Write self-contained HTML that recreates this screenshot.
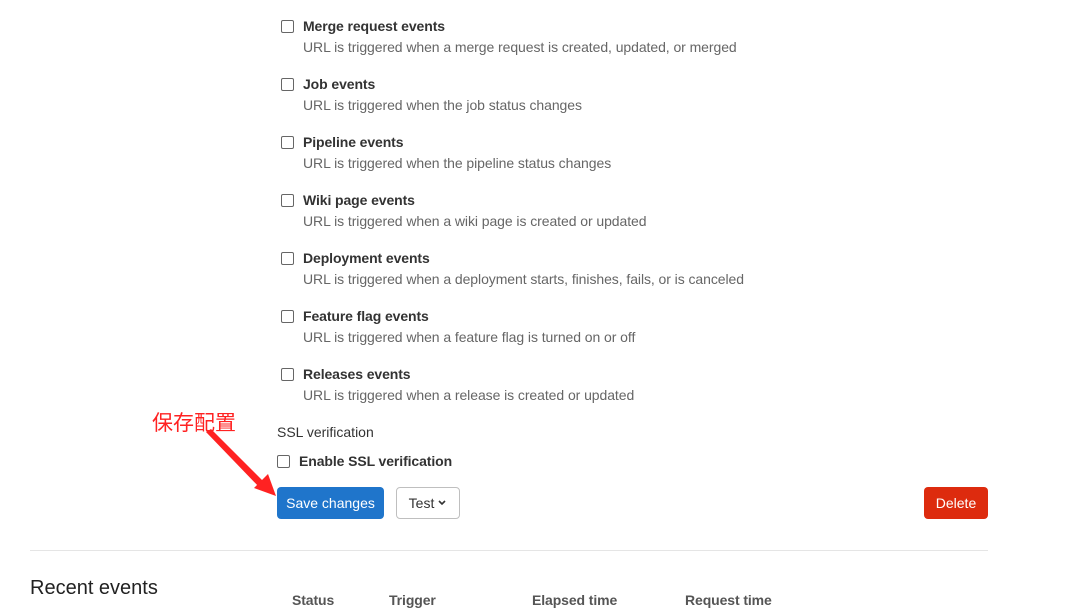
<!DOCTYPE html>
<html><head><meta charset="utf-8"><style>
body{margin:0;width:1080px;height:607px;overflow:hidden;background:#fff;font-family:"Liberation Sans",sans-serif;color:#333;position:relative}
.a{position:absolute;white-space:nowrap}
.cb{position:absolute;width:11px;height:11px;border:1px solid #666;border-radius:2px;background:#fff}
.t{font-size:14px;font-weight:bold;color:#333;letter-spacing:-0.1px}
.d{font-size:14px;color:#666;letter-spacing:-0.07px}
.btn{position:absolute;border-radius:4px;font-size:14px;box-sizing:border-box;display:flex;align-items:center;justify-content:center}
</style></head><body>
<div class="cb" style="left:281px;top:20px"></div><div class="a t" style="left:303px;top:18px">Merge request events</div><div class="a d" style="left:303px;top:39px">URL is triggered when a merge request is created, updated, or merged</div>
<div class="cb" style="left:281px;top:78px"></div><div class="a t" style="left:303px;top:76px">Job events</div><div class="a d" style="left:303px;top:97px">URL is triggered when the job status changes</div>
<div class="cb" style="left:281px;top:136px"></div><div class="a t" style="left:303px;top:134px">Pipeline events</div><div class="a d" style="left:303px;top:155px">URL is triggered when the pipeline status changes</div>
<div class="cb" style="left:281px;top:194px"></div><div class="a t" style="left:303px;top:192px">Wiki page events</div><div class="a d" style="left:303px;top:213px">URL is triggered when a wiki page is created or updated</div>
<div class="cb" style="left:281px;top:252px"></div><div class="a t" style="left:303px;top:250px">Deployment events</div><div class="a d" style="left:303px;top:271px">URL is triggered when a deployment starts, finishes, fails, or is canceled</div>
<div class="cb" style="left:281px;top:310px"></div><div class="a t" style="left:303px;top:308px">Feature flag events</div><div class="a d" style="left:303px;top:329px">URL is triggered when a feature flag is turned on or off</div>
<div class="cb" style="left:281px;top:368px"></div><div class="a t" style="left:303px;top:366px">Releases events</div><div class="a d" style="left:303px;top:387px">URL is triggered when a release is created or updated</div>
<div class="a" style="left:277px;top:424px;font-size:14px;color:#333">SSL verification</div>
<div class="cb" style="left:277px;top:455px"></div><div class="a t" style="left:299px;top:453px">Enable SSL verification</div>
<div class="a" style="left:152px;top:408px;font-size:21px;color:#f22;font-family:'Noto Sans CJK SC',sans-serif;line-height:28px">保存配置</div>
<svg class="a" style="left:0;top:0" width="400" height="560"><polygon points="206,432 211,429 266,484 260,488" fill="#f22"/><polygon points="276,496 254,488 268,474" fill="#f22"/></svg>
<div class="btn" style="left:277px;top:487px;width:107px;height:32px;background:#1f75cb;color:#fff">Save changes</div>
<div class="btn" style="left:396px;top:487px;width:64px;height:32px;border:1px solid #bfbfbf;color:#333">Test <svg width="10" height="8" style="margin-left:3px"><path d="M2 2l3 3 3-3" stroke="#333" stroke-width="1.6" fill="none"/></svg></div>
<div class="btn" style="left:924px;top:487px;width:64px;height:32px;background:#dd2b0e;color:#fff">Delete</div>
<div class="a" style="left:30px;top:550px;width:958px;height:1px;background:#e5e5e5"></div>
<div class="a" style="left:30px;top:577px;font-size:20px;color:#222">Recent events</div>
<div class="a t" style="left:292px;top:592px;color:#555">Status</div>
<div class="a t" style="left:389px;top:592px;color:#555">Trigger</div>
<div class="a t" style="left:532px;top:592px;color:#555">Elapsed time</div>
<div class="a t" style="left:685px;top:592px;color:#555">Request time</div>
</body></html>
